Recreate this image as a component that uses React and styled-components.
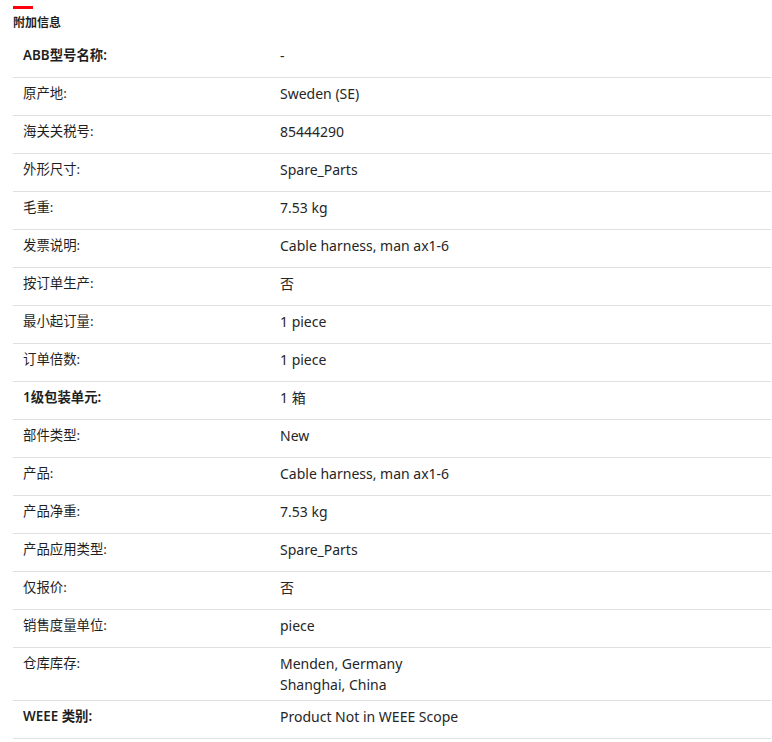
import React from 'react';
import styled, { createGlobalStyle } from 'styled-components';

const GlobalStyle = createGlobalStyle`
    body {
        margin: 0;
        background: #ffffff;
        font-family: "Noto Sans", "Noto Sans CJK SC", sans-serif;
        color: #1f1f1f;
    }
`;

const Page = styled.div`
    padding: 6px 1px 0 13px;
`;

const RedBar = styled.div`
    width: 20px;
    height: 3px;
    background: #ff000f;
`;

const Title = styled.h3`
    margin: 5px 0 0;
    font-size: 12px;
    line-height: 16px;
    font-weight: 700;
    font-family: "Noto Sans CJK SC", sans-serif;
`;

const Table = styled.div`
    margin-top: 10px;
    display: flex;
    flex-direction: column;
`;

const Row = styled.div`
    display: flex;
    align-items: flex-start;
    min-height: 38px;
    box-sizing: border-box;
    padding: 5px 0;
    border-bottom: 1px solid #e0e0e0;
    line-height: 21px;
`;

const Label = styled.div`
    width: 267px;
    flex-shrink: 0;
    padding-left: 10px;
    box-sizing: border-box;
    font-size: 13.4px;
    font-family: "Noto Sans", "Noto Sans CJK SC", sans-serif;
    font-weight: ${(p) => (p.$strong ? 600 : 400)};
`;

const Value = styled.div`
    flex: 1;
    display: flex;
    flex-direction: column;
    font-size: 14px;
    color: #262626;
`;

const rows = [
    ['ABB型号名称:', ['-'], true],
    ['原产地:', ['Sweden (SE)']],
    ['海关关税号:', ['85444290']],
    ['外形尺寸:', ['Spare_Parts']],
    ['毛重:', ['7.53 kg']],
    ['发票说明:', ['Cable harness, man ax1-6']],
    ['按订单生产:', ['否']],
    ['最小起订量:', ['1 piece']],
    ['订单倍数:', ['1 piece']],
    ['1级包装单元:', ['1 箱'], true],
    ['部件类型:', ['New']],
    ['产品:', ['Cable harness, man ax1-6']],
    ['产品净重:', ['7.53 kg']],
    ['产品应用类型:', ['Spare_Parts']],
    ['仅报价:', ['否']],
    ['销售度量单位:', ['piece']],
    ['仓库库存:', ['Menden, Germany', 'Shanghai, China']],
    ['WEEE 类别:', ['Product Not in WEEE Scope'], true],
];

const App = () => {
    return (
        <Page>
            <GlobalStyle />
            <RedBar />
            <Title>附加信息</Title>
            <Table>
                {rows.map(([label, values, strong]) => (
                    <Row key={label}>
                        <Label $strong={strong}>{label}</Label>
                        <Value>
                            {values.map((v) => (
                                <span key={v}>{v}</span>
                            ))}
                        </Value>
                    </Row>
                ))}
            </Table>
        </Page>
    );
};

export default App;
